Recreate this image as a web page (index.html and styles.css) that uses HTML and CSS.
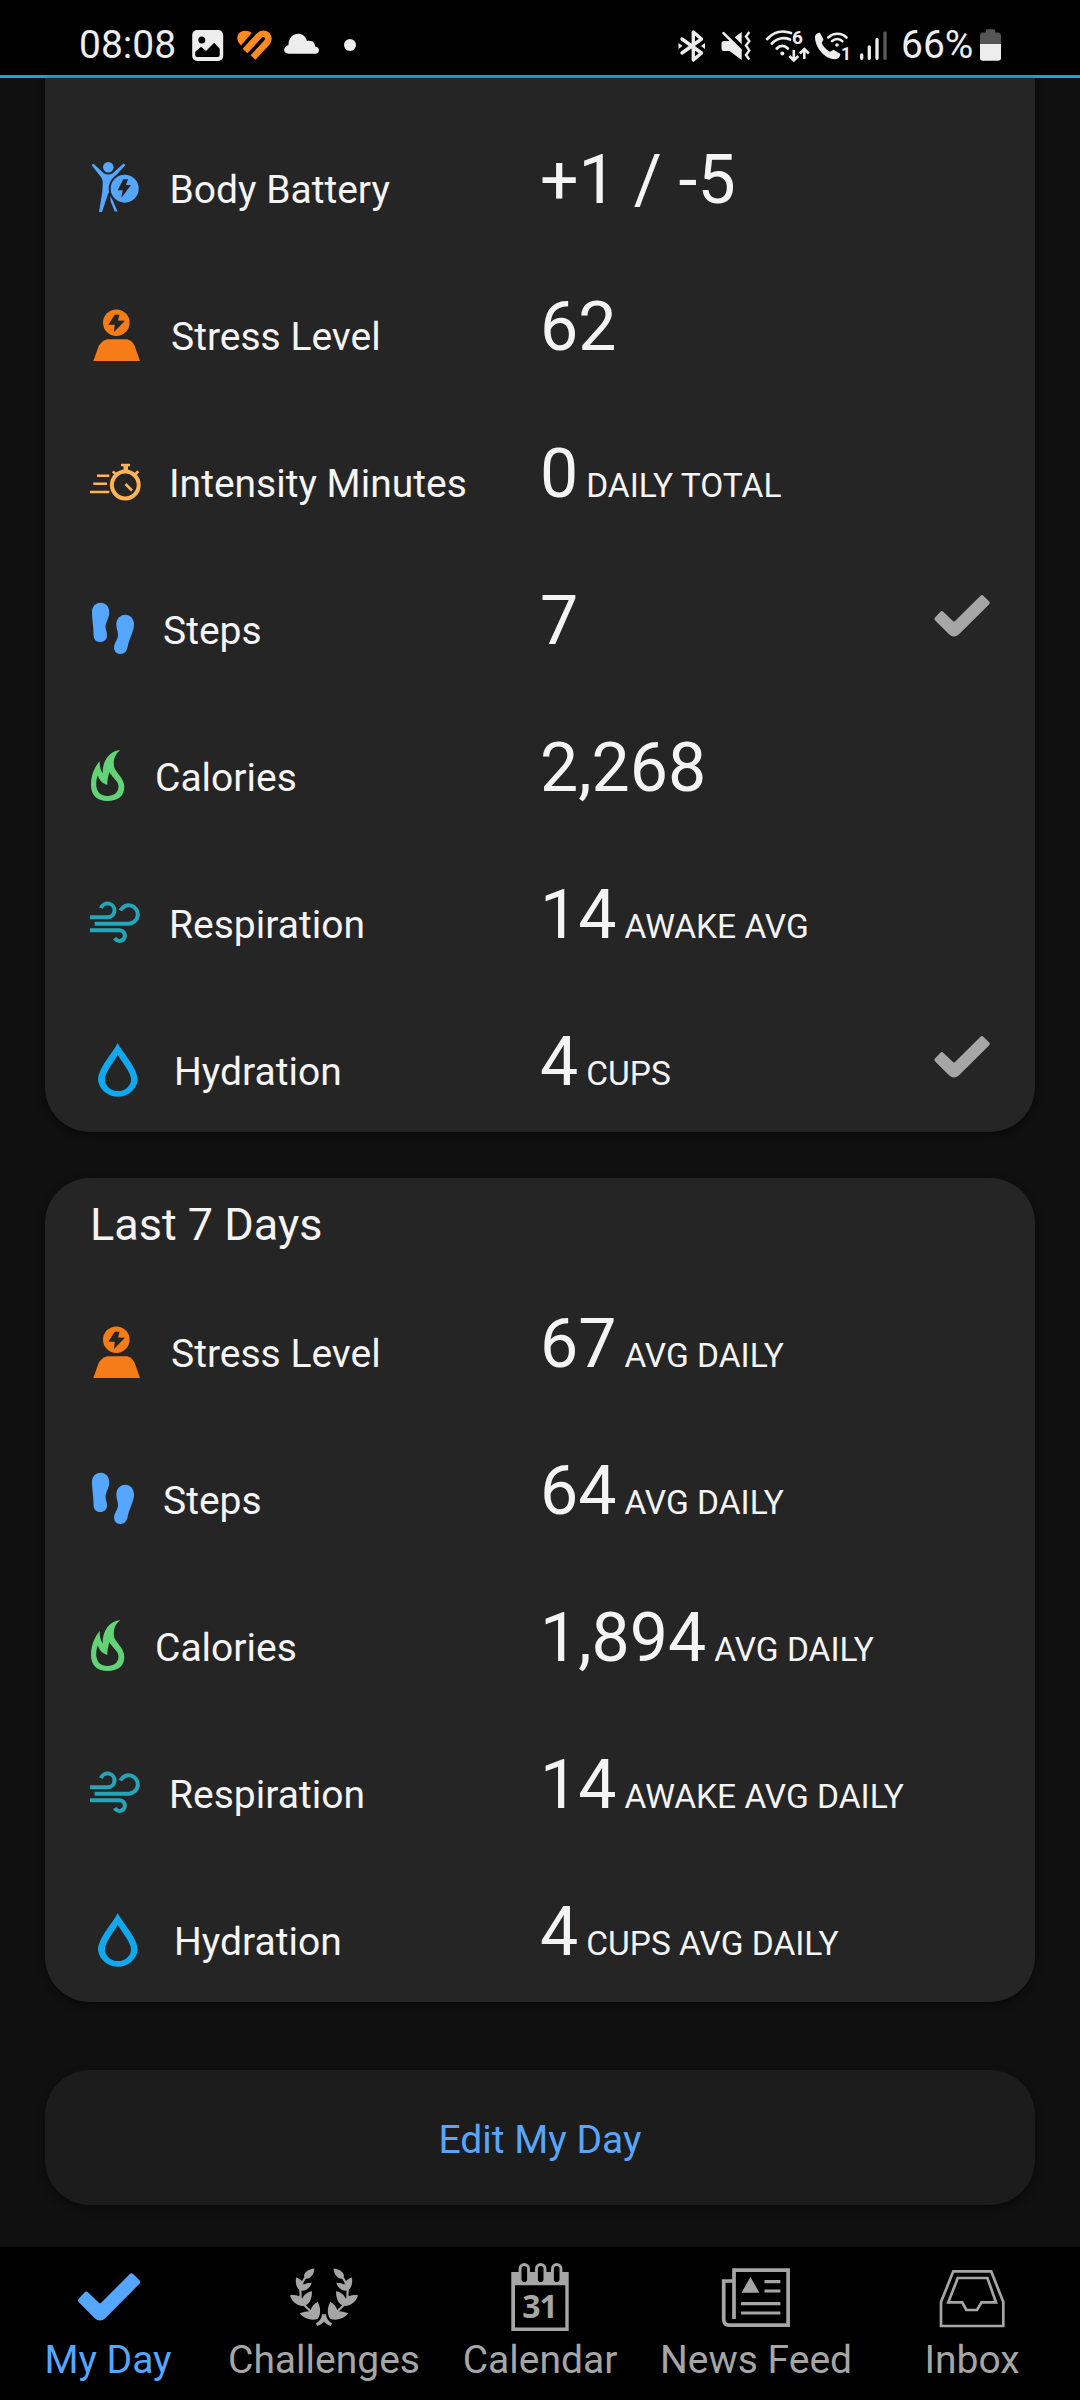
FILE: index.html
```
<!DOCTYPE html>
<html lang="en">
<head>
    <meta charset="UTF-8">
    <title>My Day</title>
    <link rel="stylesheet" href="styles.css">
</head>
<body>
    <!-- Icons used more than once -->
    <svg class="sprite">
        <symbol id="stress" viewBox="0 0 52 60">
            <circle cx="26.3" cy="18.7" r="13.3"/>
            <path class="cut" d="M24.7 10.7H29.5L28 16.5L35 16.8L24 28L24.7 20.7H18.3Z"/>
            <path d="M3.3 57L8.7 42Q11.5 37 17.3 35.3H37.3Q42.5 37 44.7 42L50 57Z"/>
        </symbol>
        <symbol id="steps" viewBox="0 0 44 60">
            <path d="M10.7 4.7C16 4.7 19.3 9 19.3 14.5C19.3 20 15.5 24 15.5 29C15.5 32 17 34 17 37.5C17 41.5 14 44 10.2 44C6 44 3.6 41.5 3.6 37C3.6 28 2 22 2 14C2 8.5 5.5 4.7 10.7 4.7Z"/>
            <path d="M35.3 16.7C40.5 16.7 44 21 44 26.5C44 33 39.5 40 37.8 48C37 53 34.5 56 30.5 56C26 56 23.5 52.5 24.2 48C25 44 28 41 28 37C28 33 26.3 31 26.3 26.5C26.3 21 30 16.7 35.3 16.7Z"/>
        </symbol>
        <symbol id="calories" viewBox="0 0 36 60">
            <path fill-rule="evenodd" d="M30.3 5C24 10 23 17 24.3 22.5C26 28 34.3 33 34.3 42C34.3 51 27.5 56 17.5 56C7.5 56 1 50.5 1 40C1 29 5.5 21 9.7 16C9.5 21 10.5 25 12.7 28.5C12.3 15 20 6 30.3 5ZM7.8 30.5C6 35 6.2 38 6.3 41C7 47.5 11 51 17.5 51C24 51 28.5 47.5 28.5 41.5C28.5 36 23 33.5 19.3 27C18.5 31 17.5 33 17.3 40C12.5 38.5 9.5 35.5 7.8 30.5Z"/>
        </symbol>
        <symbol id="respiration" viewBox="0 0 50 60">
            <path class="line" stroke-width="4" d="M0 25.3H17.5A6.9 6.9 0 1 0 11 16.2M4.7 31.7H38.8A9.2 9.2 0 1 0 30.3 18.5M0 38.3H29.5A5.3 5.3 0 1 1 24.8 46"/>
        </symbol>
        <symbol id="hydration" viewBox="0 0 55 60">
            <path fill-rule="evenodd" d="M27.7 4C32 13 47.7 29 47.7 41A20 19 0 0 1 8 41C8 29 23.5 13 27.7 4ZM27.7 15.5C24 23 15 33 15 40.5A13 11.5 0 0 0 41 40.5C41 33 31.5 23 27.7 15.5Z"/>
        </symbol>
        <symbol id="check" viewBox="0 0 56 43" preserveAspectRatio="none">
            <path d="M1.2 23.3L6.2 17.9Q7.8 16.2 9.5 17.9L19 27Q20 28 21 27L46.5 1.8Q48 .3 49.6 1.9L55 7.2Q56.6 8.8 55 10.4L25 40.3Q20 44.8 15 40.3L1.2 26.6Q-.3 25 1.2 23.3Z"/>
        </symbol>
    </svg>

    <!-- Status bar -->
    <header class="status">
        <div class="status-left">
            <span class="clock">08:08</span>
            <svg class="picture" width="32" height="36">
                <rect x=".2" y="3" width="31" height="31" rx="5"/>
                <circle class="hole" cx="9.8" cy="13" r="3.5"/>
                <path class="hole" d="M3.2 24.7L9.1 19.7L14 24L22.2 15.7L27.7 21.7V28Q27.7 30 25.7 30H5.2Q3.2 30 3.2 28Z"/>
            </svg>
            <svg class="heart" width="36" height="36">
                <path d="M5 18.5C-.5 13 .8 7.5 4.5 5C8 3 12.5 3.5 15.7 6Z"/>
                <path class="line" stroke-width="6.6" d="M9 24L22.8 9C26 5.8 29.5 6.5 31.2 8.5C33 11 32.6 13.5 30.5 16L17 30.5"/>
            </svg>
            <svg class="cloud" width="36" height="36">
                <path d="M4.5 26.7C-1.5 26.7 -1 19 4.5 18C4.5 5 20 3 23 14C28 12.5 31.5 16 31 19.5C36.5 20 36 26.7 31.5 26.7Z"/>
            </svg>
            <span class="more-dot"></span>
        </div>
        <div class="status-right">
            <svg class="bluetooth" width="28" height="36">
                <path class="line" stroke-width="3.4" stroke-linejoin="round" stroke-linecap="round" d="M4 12L23.5 26L15.3 33V5L23.5 12L4 26"/>
                <path d="M.5 16L4.5 19L.5 22ZM27 16L23 19L27 22Z"/>
            </svg>
            <svg class="mute" width="32" height="36">
                <path d="M4 14H9.5L21.7 5V33L9.5 24H4Q1.5 24 1.5 21.5V16.5Q1.5 14 4 14Z"/>
                <path class="line gap" stroke-width="4" d="M4 2.5L25 23.5"/>
                <path class="line" stroke-width="2.6" stroke-linecap="round" d="M3.5 6.2L20.5 23"/>
                <path class="line" stroke-width="2.4" d="M29.3 5L26 9.5L29.3 14L26 18.5L29.3 23.5L26 28L29.3 32.5"/>
            </svg>
            <svg class="wifi" width="45" height="36">
                <path class="line" stroke-width="2.8" stroke-linecap="round" d="M2.2 12C9 4.5 18 3 26 6M6.8 16.5C12 11 19 10 25 12.5M11.8 21.5C15 18 19.5 18 22.8 21.5"/>
                <circle cx="17.3" cy="26.5" r="2"/>
                <text x="27" y="17.4" font-size="19">6</text>
                <path class="line" stroke-width="2.6" d="M28.8 23V33M24.3 29L28.8 33.5L33.3 29M39.3 32V22M34.8 26.5L39.3 22L43.8 26.5"/>
            </svg>
            <svg class="call" width="37" height="36">
                <path d="M2 10C2 7.5 4.5 5.7 7 5.7L10.5 12.5L8.7 16C10.5 20 13 22.5 17 24.7L20.5 22.7L27.5 27C27 30.5 24.5 32.5 21.5 32.3C11 31.5 2 20 2 10Z"/>
                <path class="line" stroke-width="2.6" stroke-linecap="round" d="M15.3 10.5C20.5 5.5 28.5 5.5 33.5 10.5M19 14.2C22 11.2 26.5 11.2 29.3 14.2"/>
                <circle cx="24" cy="18" r="1.8"/>
                <text x="28" y="32.5" font-size="17.5">1</text>
            </svg>
            <svg class="signal" width="29" height="36">
                <path class="line" stroke-width="3.3" stroke-linecap="round" d="M2.7 28V31.3M10.3 20V31.3M18 12.5V31.3"/>
                <path class="line dim" stroke-width="3.3" stroke-linecap="round" d="M26 6V31.3"/>
            </svg>
            <span class="percent">66%</span>
            <svg class="battery" width="21" height="36">
                <path class="empty" d="M6 3.5Q6 2.3 7.2 2.3H14Q15.3 2.3 15.3 3.5V5.5H18Q21 5.5 21 9V17H0V9Q0 5.5 3 5.5H6Z"/>
                <path d="M0 17H21V31Q21 33.8 18 33.8H3Q0 33.8 0 31Z"/>
            </svg>
        </div>
    </header>

    <main class="content">
        <!-- Today -->
        <section class="card today">
            <div class="row">
                <div class="name blue">
                    <svg width="50.5" height="60">
                        <circle cx="18.3" cy="10.3" r="5.3"/>
                        <path d="M1.5 8L3.5 6.7L14 16.5Q18.3 18.5 22.5 16.5L33.5 6.5L35.5 8L24 20.5L22.5 30L18 37L12 55H9L12.3 35L12.8 25Q12.5 21.5 10.5 19.5Z"/>
                        <path d="M20.5 38L27.5 54.5H24.7L20.5 44Z"/>
                        <circle class="badge" cx="34.7" cy="31.7" r="15"/>
                        <path class="cut" d="M33.3 22.3H38L36 28H41L31.3 41L32.7 33.3H27.7Z"/>
                    </svg>
                    <span>Body Battery</span>
                </div>
                <div class="value">+1 / -5</div>
            </div>
            <div class="row">
                <div class="name orange"><svg width="52" height="60"><use href="#stress"/></svg><span>Stress Level</span></div>
                <div class="value">62</div>
            </div>
            <div class="row">
                <div class="name amber">
                    <svg width="50" height="60">
                        <circle class="line" stroke-width="4" cx="35.3" cy="34" r="13.4"/>
                        <path d="M31 12.7H40V15.2H38V20H33.5V15.2H31Z"/>
                        <path class="line" stroke-width="2.6" d="M22.8 20.3L26 23.5M48.3 20.3L45 23.5M35.5 33L42 39.5M7 24.7H19.3M3.3 32.7H17M0 41H19.3"/>
                    </svg>
                    <span>Intensity Minutes</span>
                </div>
                <div class="value">0 <small>DAILY TOTAL</small></div>
            </div>
            <div class="row">
                <div class="name blue"><svg width="44" height="60"><use href="#steps"/></svg><span>Steps</span></div>
                <div class="value">7</div>
                <svg class="done" width="56" height="43"><use href="#check"/></svg>
            </div>
            <div class="row">
                <div class="name green"><svg width="36" height="60"><use href="#calories"/></svg><span>Calories</span></div>
                <div class="value">2,268</div>
            </div>
            <div class="row">
                <div class="name teal"><svg width="50" height="60"><use href="#respiration"/></svg><span>Respiration</span></div>
                <div class="value">14 <small>AWAKE AVG</small></div>
            </div>
            <div class="row">
                <div class="name cyan"><svg width="55" height="60"><use href="#hydration"/></svg><span>Hydration</span></div>
                <div class="value">4 <small>CUPS</small></div>
                <svg class="done" width="56" height="43"><use href="#check"/></svg>
            </div>
        </section>

        <!-- Last 7 days -->
        <section class="card week">
            <h2>Last 7 Days</h2>
            <div class="row">
                <div class="name orange"><svg width="52" height="60"><use href="#stress"/></svg><span>Stress Level</span></div>
                <div class="value">67 <small>AVG DAILY</small></div>
            </div>
            <div class="row">
                <div class="name blue"><svg width="44" height="60"><use href="#steps"/></svg><span>Steps</span></div>
                <div class="value">64 <small>AVG DAILY</small></div>
            </div>
            <div class="row">
                <div class="name green"><svg width="36" height="60"><use href="#calories"/></svg><span>Calories</span></div>
                <div class="value">1,894 <small>AVG DAILY</small></div>
            </div>
            <div class="row">
                <div class="name teal"><svg width="50" height="60"><use href="#respiration"/></svg><span>Respiration</span></div>
                <div class="value">14 <small>AWAKE AVG DAILY</small></div>
            </div>
            <div class="row">
                <div class="name cyan"><svg width="55" height="60"><use href="#hydration"/></svg><span>Hydration</span></div>
                <div class="value">4 <small>CUPS AVG DAILY</small></div>
            </div>
        </section>

        <button class="edit">Edit My Day</button>
    </main>

    <!-- Bottom navigation -->
    <nav class="tabs">
        <a class="tab active">
            <svg width="72" height="72"><use href="#check" x="5.5" y="10" width="63" height="49"/></svg>
            <span>My Day</span>
        </a>
        <a class="tab">
            <svg width="72" height="72">
                <g id="branch">
                    <path d="M26.3 6.5C26.3 12 23 17 16.5 17C14.5 11 19 7.5 26.3 6.5Z"/>
                    <path d="M8.3 15.3C13 17.5 15.5 20 15.5 22.5Q19 20.5 23.7 20.7C22 26.5 18 29 12.7 28.7C8 26 7 20 8.3 15.3Z"/>
                    <path d="M2 33.3C8 32.5 12 34 14.5 36.5C16 32 20 30 24 29.3C24 38 21 43 15.3 44C9 44 4 40 2 33.3Z"/>
                    <path d="M11.7 51.3C16 50 20 49 22.5 49.5C23 45 26 42 29.7 39.7C33 46 33 53 29.5 57C22 59 15 56 11.7 51.3Z"/>
                    <path class="line" stroke-width="2.2" d="M17 16L13.5 22M12.5 27V36M15 42L24 50.5"/>
                    <path d="M36.1 52.3H34C33.5 57 31 60 28 61L29 64C32 63.5 34.5 61.5 36.1 59.5Z"/>
                </g>
                <use href="#branch" transform="matrix(-1 0 0 1 72 0)"/>
            </svg>
            <span>Challenges</span>
        </a>
        <a class="tab">
            <svg width="72" height="72">
                <path fill-rule="evenodd" d="M7.3 10H64.7V69H7.3ZM11 23.3V65.5H61.3V23.3Z"/>
                <rect x="14.6" y="1" width="11.4" height="20" rx="5.7"/>
                <rect x="31" y="1" width="11.4" height="20" rx="5.7"/>
                <rect x="47" y="1" width="11.4" height="20" rx="5.7"/>
                <rect class="hole" x="17.5" y="4" width="5.6" height="16" rx="2.8"/>
                <rect class="hole" x="33.9" y="4" width="5.6" height="16" rx="2.8"/>
                <rect class="hole" x="49.9" y="4" width="5.6" height="16" rx="2.8"/>
                <text class="date" x="35.5" y="55.7">31</text>
            </svg>
            <span>Calendar</span>
        </a>
        <a class="tab">
            <svg width="72" height="72">
                <path class="line" stroke-width="3.7" d="M14 57V8.2H68.1V63.1H9Q3.7 63.1 3.7 57V19H13"/>
                <path d="M30.4 15L39.4 30.7H21.5Z"/>
                <path class="line" stroke-width="3.2" d="M44.5 19.7H60.4M44.5 29H60.4M21.1 41.7H60.4M21.1 51H60.4"/>
            </svg>
            <span>News Feed</span>
        </a>
        <a class="tab">
            <svg width="72" height="72">
                <path class="line" stroke-width="2.7" d="M17.3 9.3H55.2L67.3 40V64H5V40ZM21.8 16H51.4L60 40.3H45.5L41 48H30.4L26.2 40.3H12.3Z"/>
            </svg>
            <span>Inbox</span>
        </a>
    </nav>
</body>
</html>
```
FILE: styles.css
```
/* Reset and basic styles */
* {
    margin: 0;
    padding: 0;
    box-sizing: border-box;
}

body {
    display: flex;
    flex-direction: column;
    height: 2400px;
    background-color: #101010;
    color: #f4f4f4;
    font-family: Roboto, sans-serif;
    font-size: 39px;
    overflow: hidden;
}

svg {
    display: block;
    flex: none;
    overflow: visible;
    fill: currentColor;
}

.sprite {
    position: absolute;
    width: 0;
    height: 0;
}

.line {
    fill: none;
    stroke: currentColor;
}

.cut {
    fill: #252525;
}

.hole {
    fill: #000;
}

/* Status bar */
.status {
    display: flex;
    justify-content: space-between;
    height: 78px;
    padding: 15px 79px 0;
    background-color: #000;
    border-bottom: 3px solid #1f9fde;
    color: #ededed;
    font-size: 39px;
    line-height: 60px;
}

.status-left,
.status-right {
    display: flex;
    align-items: center;
    height: 60px;
}

.clock {
    width: 113px;
}

.heart {
    margin-left: 12px;
    color: #ff8a1f;
}

.cloud {
    margin-left: 12px;
}

.more-dot {
    width: 12px;
    height: 12px;
    margin-left: 24px;
    border-radius: 50%;
    background-color: #ededed;
}

.mute {
    margin-left: 14px;
}

.wifi {
    margin-left: 13px;
}

.call {
    margin-left: 3px;
}

.wifi text,
.call text {
    font-weight: 700;
}

.signal {
    margin-left: 9px;
}

.percent {
    width: 79px;
    margin-left: 13px;
}

.gap {
    stroke: #000;
}

.dim {
    stroke: #5a5a5a;
}

.empty {
    fill: #555;
}

/* Cards */
.content {
    flex: 1;
    padding: 0 45px;
}

.card {
    background-color: #252525;
    box-shadow: 0 3px 9px rgba(0, 0, 0, 0.45);
}

.today {
    padding-top: 25px;
    border-radius: 0 0 45px 45px;
}

.week {
    margin-top: 46px;
    border-radius: 45px;
}

.week h2 {
    height: 89px;
    padding: 20px 45px 0;
    font-size: 45px;
    font-weight: 400;
    line-height: 53px;
}

.row {
    display: grid;
    grid-template-columns: 450px 1fr 56px;
    align-items: start;
    height: 147px;
    padding: 37px 45px 0;
}

.name {
    display: flex;
    align-items: center;
    gap: 29px;
    height: 60px;
    margin-top: 17px;
}

.name span {
    padding-top: 6px;
    color: #f4f4f4;
    line-height: 46px;
}

.value {
    display: flex;
    align-items: baseline;
    gap: 8px;
    font-size: 68px;
    line-height: 80px;
    white-space: nowrap;
}

.value small {
    font-size: 33.5px;
    line-height: 40px;
}

.done {
    margin-top: 13px;
    color: #a6a6a6;
}

.badge {
    stroke: #252525;
    stroke-width: 2;
}

/* Metric colors */
.blue { color: #55a6ff; }
.orange { color: #f57c17; }
.amber { color: #fdb356; }
.green { color: #62d377; }
.teal { color: #25a6b8; }
.cyan { color: #10a8ee; }

.edit {
    display: block;
    width: 100%;
    height: 135px;
    margin-top: 68px;
    padding-top: 5px;
    border: none;
    border-radius: 45px;
    background-color: #1c1c1c;
    box-shadow: 0 3px 9px rgba(0, 0, 0, 0.4);
    color: #58a6fb;
    font: inherit;
}

/* Bottom navigation */
.tabs {
    display: grid;
    grid-template-columns: repeat(5, 1fr);
    height: 153px;
    padding-top: 15px;
    background-color: #000;
}

.tab {
    display: flex;
    flex-direction: column;
    align-items: center;
    color: #a6a6a6;
    line-height: 46px;
}

.tab span {
    margin-top: 3px;
}

.active {
    color: #55a6ff;
}

.date {
    font-family: "Noto Sans", sans-serif;
    font-size: 32px;
    font-weight: 700;
    letter-spacing: -1px;
    text-anchor: middle;
}
```
